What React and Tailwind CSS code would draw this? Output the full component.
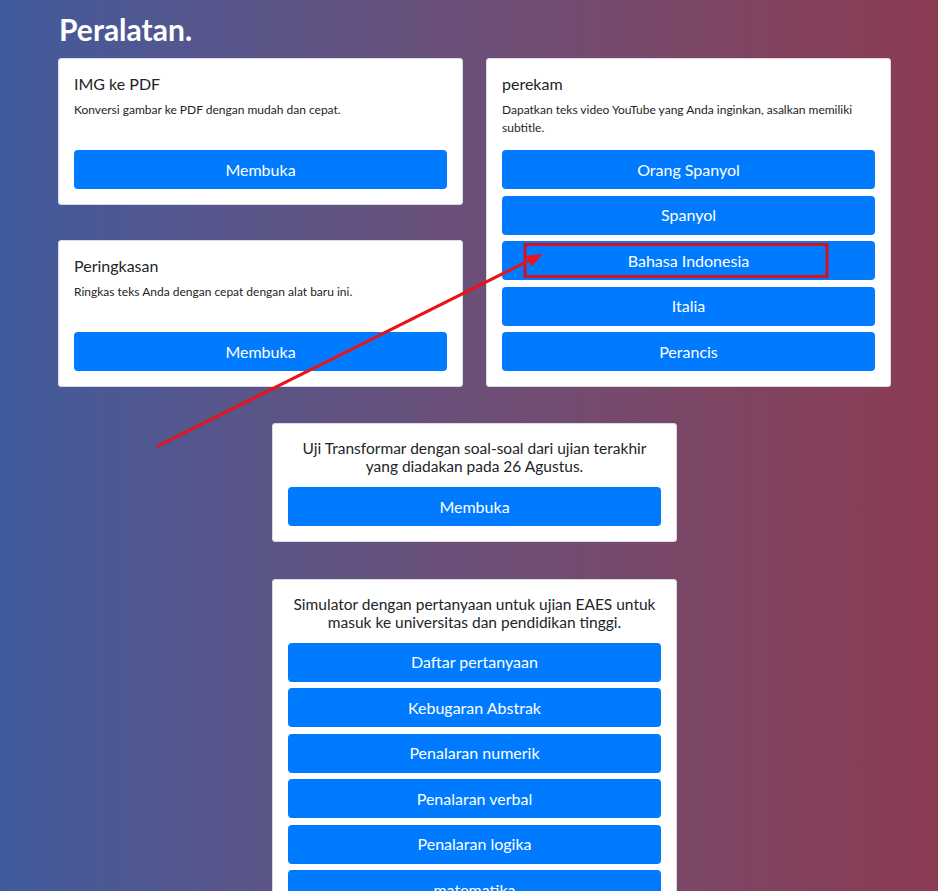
const font = { fontFamily: 'Lato, "Noto Sans", sans-serif' }

function Btn({ children }) {
  return (
    <button className="w-full h-[39px] rounded-[4px] bg-[#007bff] text-white text-[16px] leading-none">
      {children}
    </button>
  )
}

function ToolCard({ title, desc, children }) {
  return (
    <div className="bg-white rounded-[3px] border border-[#d9dbe4] px-[15px] pt-[14px] pb-[15px]">
      <h5 className="text-[16px] leading-[22px] text-[#212529]">{title}</h5>
      <p className="mt-[6px] min-h-[36px] text-[12px] leading-[18px] text-[#212529]">{desc}</p>
      <div className="mt-[13px] flex flex-col gap-[6.5px]">{children}</div>
    </div>
  )
}

function CenterCard({ text, children }) {
  return (
    <div className="w-[405px] mx-auto bg-white rounded-[3px] border border-[#d9dbe4] px-[15px] pt-[15px] pb-[15px]">
      <p className="text-center text-[15.5px] leading-[18px] text-[#212529] px-[4px]">{text}</p>
      <div className="mt-[12px] flex flex-col gap-[6.5px]">{children}</div>
    </div>
  )
}

const simulator = [
  'Daftar pertanyaan',
  'Kebugaran Abstrak',
  'Penalaran numerik',
  'Penalaran verbal',
  'Penalaran logika',
  'matematika',
]

export default function App() {
  return (
    <div style={font} className="relative h-[891px] overflow-hidden bg-gradient-to-r from-[#3f5a9c] to-[#8c3a52]">
      <div className="w-[833px] ml-[58px]">
        <h1 className="pt-[10px] text-[30px] leading-[38px] font-bold text-white pl-[1px]">Peralatan.</h1>

        <div className="mt-[10px] grid grid-cols-2 gap-x-[23px]">
          <div className="flex flex-col justify-between">
            <ToolCard title="IMG ke PDF" desc="Konversi gambar ke PDF dengan mudah dan cepat.">
              <Btn>Membuka</Btn>
            </ToolCard>
            <ToolCard title="Peringkasan" desc="Ringkas teks Anda dengan cepat dengan alat baru ini.">
              <Btn>Membuka</Btn>
            </ToolCard>
          </div>
          <ToolCard title="perekam" desc="Dapatkan teks video YouTube yang Anda inginkan, asalkan memiliki subtitle.">
            <Btn>Orang Spanyol</Btn>
            <Btn>Spanyol</Btn>
            <Btn>Bahasa Indonesia</Btn>
            <Btn>Italia</Btn>
            <Btn>Perancis</Btn>
          </ToolCard>
        </div>

        <div className="mt-[36px] flex flex-col gap-[36.5px]">
          <CenterCard text="Uji Transformar dengan soal-soal dari ujian terakhir yang diadakan pada 26 Agustus.">
            <Btn>Membuka</Btn>
          </CenterCard>
          <CenterCard text="Simulator dengan pertanyaan untuk ujian EAES untuk masuk ke universitas dan pendidikan tinggi.">
            {simulator.map((s) => (
              <Btn key={s}>{s}</Btn>
            ))}
          </CenterCard>
        </div>
      </div>

      {/* annotation overlay */}
      <svg className="absolute left-0 top-0 pointer-events-none" width="938" height="891">
        <rect x="525" y="244.5" width="302" height="32" fill="none" stroke="#d8101e" strokeWidth="3" />
        <line x1="158" y1="446" x2="530" y2="260" stroke="#e8141c" strokeWidth="3" strokeLinecap="round" />
        <polygon points="543,254 531.4,266.6 526,255.8" fill="#e8141c" />
      </svg>
    </div>
  )
}
